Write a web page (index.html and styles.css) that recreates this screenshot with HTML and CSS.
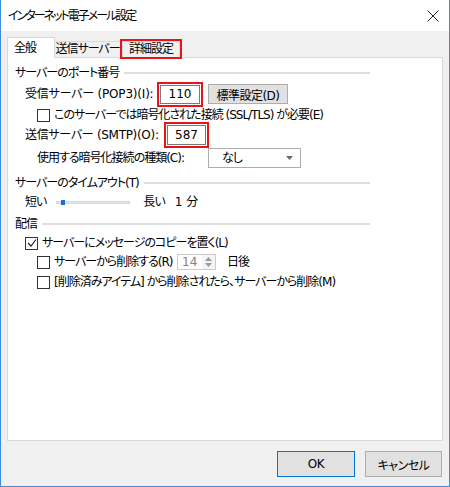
FILE: index.html
```html
<!DOCTYPE html>
<html lang="ja">
<head>
  <meta charset="UTF-8" />
  <meta name="viewport" content="width=device-width, initial-scale=1.0" />
  <title>インターネット電子メール設定</title>
  <link rel="stylesheet" href="styles.css">
</head>
<body>
  <div class="dialog">
    <div class="titlebar">
      <span class="title">インターネット電子メール設定</span>
      <svg class="close" width="12" height="12" viewBox="0 0 12 12">
        <path d="M0.5 0.5 L11.5 11.5 M11.5 0.5 L0.5 11.5" stroke="#222" stroke-width="1" fill="none" />
      </svg>
    </div>

    <div class="content">
      <div class="tabs">
        <div class="tab active">全般</div>
        <div class="tab tab-send">送信サーバー</div>
        <div class="tab tab-detail marked">詳細設定</div>
      </div>

      <div class="panel">
        <div class="group">
          <div class="group-title"><span>サーバーのポート番号</span></div>
          <div class="row row-pop">
            <span class="label label-pop">受信サーバー (POP3)(I):</span>
            <div class="textbox box-pop marked">110</div>
            <button class="btn btn-default">標準設定(D)</button>
          </div>
          <div class="row row-ssl sub">
            <span class="check"></span>
            <span>このサーバーでは暗号化された接続 (SSL/TLS) が必要(E)</span>
          </div>
          <div class="row row-smtp">
            <span class="label label-smtp">送信サーバー (SMTP)(O):</span>
            <div class="textbox box-smtp marked">587</div>
          </div>
          <div class="row row-enc sub">
            <span class="label label-enc">使用する暗号化接続の種類(C):</span>
            <div class="select">
              <span>なし</span>
              <svg width="7" height="4" viewBox="0 0 7 4"><path d="M0 0 H7 L3.5 4 Z" fill="#6a6a6a" /></svg>
            </div>
          </div>
        </div>

        <div class="group group-timeout">
          <div class="group-title"><span>サーバーのタイムアウト(T)</span></div>
          <div class="row row-slider">
            <span>短い</span>
            <div class="track"><span class="thumb"></span></div>
            <span>長い</span>
            <span class="minutes">1 分</span>
          </div>
        </div>

        <div class="group group-delivery">
          <div class="group-title"><span>配信</span></div>
          <div class="row row-copy">
            <span class="check checked">
              <svg width="10" height="10" viewBox="0 0 10 10"><path d="M1 5 L4 8 L9 1.5" stroke="#222" stroke-width="1.2" fill="none" /></svg>
            </span>
            <span>サーバーにメッセージのコピーを置く(L)</span>
          </div>
          <div class="row row-delete sub">
            <span class="check"></span>
            <span class="label label-delete">サーバーから削除する(R)</span>
            <div class="spinner">
              <span class="spin-value">14</span>
              <div class="spin-arrows">
                <svg width="7" height="4" viewBox="0 0 7 4"><path d="M0 4 H7 L3.5 0 Z" fill="#9a9a9a" /></svg>
                <svg width="7" height="4" viewBox="0 0 7 4"><path d="M0 0 H7 L3.5 4 Z" fill="#9a9a9a" /></svg>
              </div>
            </div>
            <span class="days">日後</span>
          </div>
          <div class="row row-deleted sub">
            <span class="check"></span>
            <span>[削除済みアイテム] から削除されたら、サーバーから削除(M)</span>
          </div>
        </div>
      </div>

      <div class="footer">
        <button class="btn btn-ok">OK</button>
        <button class="btn btn-cancel">キャンセル</button>
      </div>
    </div>
  </div>
</body>
</html>
```

FILE: styles.css
```css
body {
  margin: 0;
  padding: 0;
  font-family: "DejaVu Sans", "Noto Sans CJK JP", sans-serif;
  font-size: 12px;
  font-feature-settings: "palt";
  letter-spacing: -1px;
  color: #000;
}
.dialog {
  width: 450px;
  height: 487px;
  box-sizing: border-box;
  border: 1px solid #3d8fdc;
  border-top: none;
  background-color: #f0f0f0;
  display: flex;
  flex-direction: column;
}
.titlebar {
  height: 31px;
  background-color: #fff;
  display: flex;
  align-items: center;
  justify-content: space-between;
  padding: 0 10px 0 7px;
  flex-shrink: 0;
}
.title {
  line-height: 16px;
  letter-spacing: -2px;
}
.content {
  padding: 6px 6px 0 6px;
}
.tabs {
  display: flex;
  align-items: flex-end;
  height: 20px;
  white-space: nowrap;
}
.tab {
  box-sizing: border-box;
  height: 16px;
  line-height: 15px;
  text-align: center;
  border: 1px solid #d9d9d9;
  border-bottom: none;
  background-color: #f0f0f0;
}
.tab.active {
  width: 48px;
  height: 21px;
  line-height: 21px;
  margin-bottom: -1px;
  background-color: #fff;
  text-align: left;
  padding-left: 6px;
  position: relative;
  z-index: 1;
}
.tab-send {
  width: 66px;
  border-left: none;
}
.tab-detail {
  width: 58px;
  margin-left: 1px;
}
.marked {
  outline: 2px solid #e8141a;
}
.panel {
  height: 384px;
  box-sizing: border-box;
  background-color: #fff;
  border: 1px solid #d9d9d9;
  padding-top: 7px;
}
.group {
  margin-left: 7px;
  width: 355px;
}
.group-title {
  height: 16px;
  line-height: 16px;
  display: flex;
  align-items: center;
  gap: 5px;
  white-space: nowrap;
}
.group-title::after {
  content: "";
  flex: 1;
  height: 2px;
  background-color: #dedede;
}
.group-timeout {
  margin-top: 6px;
}
.group-delivery {
  margin-top: 5px;
}
.row {
  display: flex;
  align-items: center;
  padding-left: 10px;
  height: 18px;
  line-height: 16px;
  white-space: nowrap;
}
.row.sub {
  padding-left: 22px;
}
.row-pop {
  margin-top: 1px;
  height: 24px;
}
.row-smtp {
  height: 22px;
}
.row-enc {
  margin-top: 1px;
  height: 22px;
}
.label-pop {
  width: 135px;
  letter-spacing: -0.2px;
}
.label-smtp {
  width: 142px;
  letter-spacing: -0.3px;
}
.label-enc {
  width: 171px;
}
.label-delete {
  width: 123px;
}
.textbox {
  box-sizing: border-box;
  width: 40px;
  height: 19px;
  border: 1px solid #7a7a7a;
  line-height: 17px;
  text-align: center;
  letter-spacing: 0;
  outline-offset: 1px;
}
.box-smtp {
  width: 39px;
  height: 20px;
  line-height: 18px;
}
.btn {
  box-sizing: border-box;
  font-family: inherit;
  font-size: 12px;
  font-feature-settings: "palt";
  letter-spacing: -0.5px;
  background-color: #e1e1e1;
  border: 1px solid #adadad;
  padding: 0;
  color: #000;
}
.btn-default {
  width: 80px;
  height: 20px;
  margin-left: 8px;
}
.check {
  box-sizing: border-box;
  width: 13px;
  height: 13px;
  border: 1px solid #333;
  background-color: #fff;
  margin-right: 4px;
  display: flex;
  align-items: center;
  justify-content: center;
  flex-shrink: 0;
}
.select {
  box-sizing: border-box;
  width: 93px;
  height: 20px;
  border: 1px solid #acacac;
  display: flex;
  align-items: center;
  justify-content: space-between;
  padding: 0 7px 0 13px;
}
.row-slider {
  margin-top: 2px;
}
.track {
  position: relative;
  width: 74px;
  height: 3px;
  box-sizing: border-box;
  background-color: #e7eaea;
  border: 1px solid #d6d6d6;
  margin: 0 13px 0 10px;
}
.thumb {
  position: absolute;
  left: 4px;
  top: -2px;
  width: 4px;
  height: 5px;
  background-color: #1a73c9;
}
.minutes {
  margin-left: 10px;
  letter-spacing: 0;
}
.row-copy {
  margin-top: 2px;
}
.row-delete {
  margin-top: 1px;
}
.row-deleted {
  margin-top: 2px;
}
.spinner {
  box-sizing: border-box;
  width: 39px;
  height: 16px;
  border: 1px solid #cccccc;
  display: flex;
  align-items: center;
  justify-content: space-between;
  padding-left: 4px;
  letter-spacing: 0;
}
.spin-value {
  color: #838383;
}
.spin-arrows {
  width: 13px;
  height: 14px;
  display: flex;
  flex-direction: column;
  align-items: center;
  justify-content: space-evenly;
  background-color: #f4f4f4;
}
.days {
  margin-left: 11px;
}
.footer {
  display: flex;
  justify-content: flex-end;
  gap: 10px;
  margin-top: 10px;
  padding-right: 1px;
}
.btn-ok {
  width: 78px;
  height: 26px;
  border-color: #0078d7;
}
.btn-cancel {
  width: 77px;
  height: 26px;
}
```
